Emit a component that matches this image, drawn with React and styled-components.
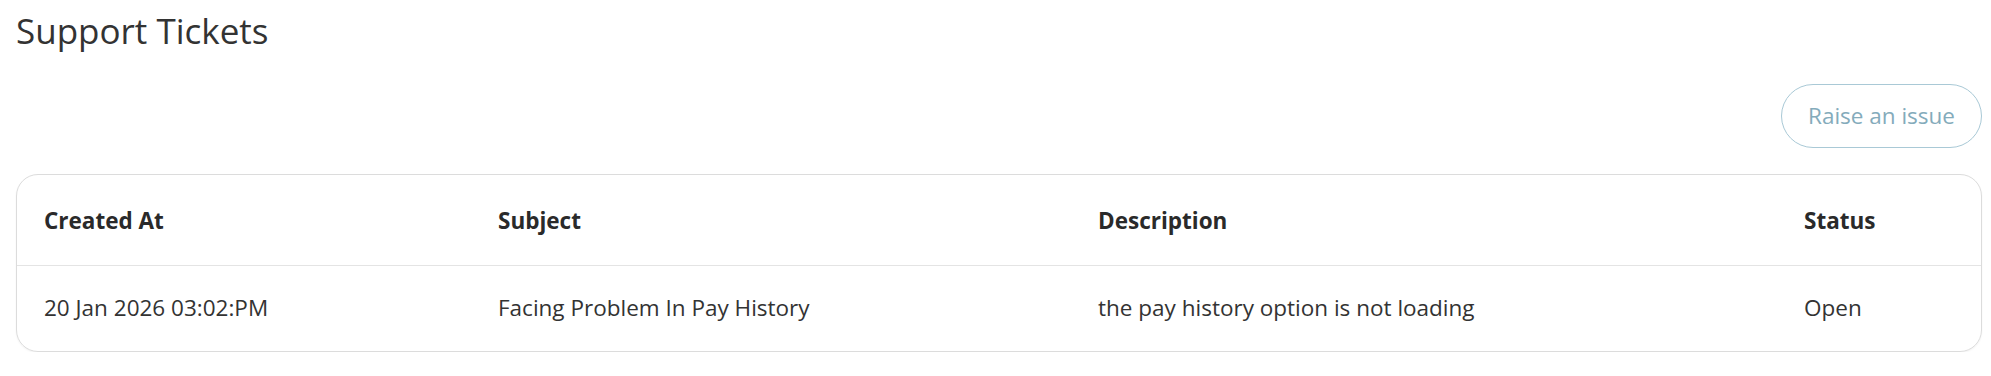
import React from "react";
import styled, { createGlobalStyle } from "styled-components";

const GlobalStyle = createGlobalStyle`
  html, body {
    margin: 0;
    padding: 0;
    background: #ffffff;
  }
  body {
    font-family: "Open Sans", "Noto Sans", "Liberation Sans", sans-serif;
    color: #333333;
  }
  * { box-sizing: border-box; }
`;

const Page = styled.div`
  padding: 7px 9px 0 16px;
  display: flex;
  flex-direction: column;
`;

const Title = styled.h1`
  margin: 0;
  font-size: 35px;
  font-weight: 400;
  line-height: 47px;
  color: #333333;
`;

const Actions = styled.div`
  display: flex;
  justify-content: flex-end;
  margin-top: 30px;
`;

const PillButton = styled.button`
  height: 64px;
  padding: 0 26px;
  display: inline-flex;
  align-items: center;
  justify-content: center;
  border: 1px solid #a9c9d6;
  border-radius: 32px;
  background: #ffffff;
  color: #84abbb;
  font-family: inherit;
  font-size: 22.5px;
  font-weight: 400;
  line-height: 30.6px;
  cursor: pointer;
`;

const TableCard = styled.div`
  margin-top: 26px;
  border: 1px solid #dcdcdc;
  border-radius: 22px;
  box-shadow: 0 1px 2px rgba(0, 0, 0, 0.05);
  overflow: hidden;
`;

const Row = styled.div`
  display: grid;
  grid-template-columns: 454px 600px 706px 1fr;
  height: ${(p) => (p.$head ? "90px" : "86px")};
  border-top: ${(p) => (p.$head ? "none" : "1px solid #e4e4e4")};
`;

const Cell = styled.div`
  padding: ${(p) => (p.$head ? "31px 27px 0" : "27px 27px 0")};
  font-size: 22.5px;
  line-height: 30.6px;
  font-weight: ${(p) => (p.$head ? 700 : 400)};
  color: ${(p) => (p.$head ? "#2a2a2a" : "#333333")};
  white-space: nowrap;
`;

const columns = ["Created At", "Subject", "Description", "Status"];
const tickets = [
  {
    id: 1,
    createdAt: "20 Jan 2026 03:02:PM",
    subject: "Facing Problem In Pay History",
    description: "the pay history option is not loading",
    status: "Open",
  },
];

export default function App() {
  return (
    <>
      <GlobalStyle />
      <Page>
        <Title>Support Tickets</Title>
        <Actions>
          <PillButton type="button">Raise an issue</PillButton>
        </Actions>
        <TableCard>
          <Row $head>
            {columns.map((c) => (
              <Cell $head key={c}>
                {c}
              </Cell>
            ))}
          </Row>
          {tickets.map((t) => (
            <Row key={t.id}>
              <Cell>{t.createdAt}</Cell>
              <Cell>{t.subject}</Cell>
              <Cell>{t.description}</Cell>
              <Cell>{t.status}</Cell>
            </Row>
          ))}
        </TableCard>
      </Page>
    </>
  );
}
